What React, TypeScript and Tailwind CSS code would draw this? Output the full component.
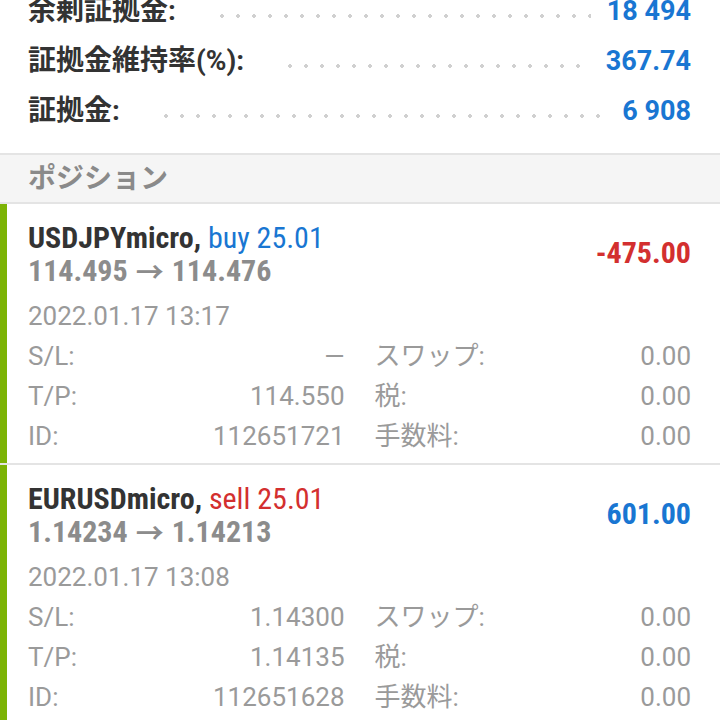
import React from 'react';

const cond = "font-['Roboto_Condensed','Liberation_Sans_Narrow',Roboto,sans-serif] [font-stretch:condensed]";

const summary = [
  { label: '余剰証拠金:', value: '18 494' },
  { label: '証拠金維持率(%):', value: '367.74' },
  { label: '証拠金:', value: '6 908' },
];

type Position = {
  symbol: string;
  side: string;
  sideColor: string;
  open: string;
  current: string;
  profit: string;
  profitColor: string;
  time: string;
  sl: string;
  tp: string;
  id: string;
};

const positions: Position[] = [
  {
    symbol: 'USDJPYmicro,',
    side: 'buy 25.01',
    sideColor: 'text-[#1976d2]',
    open: '114.495',
    current: '114.476',
    profit: '-475.00',
    profitColor: 'text-[#d32f2f]',
    time: '2022.01.17 13:17',
    sl: '—',
    tp: '114.550',
    id: '112651721',
  },
  {
    symbol: 'EURUSDmicro,',
    side: 'sell 25.01',
    sideColor: 'text-[#d32f2f]',
    open: '1.14234',
    current: '1.14213',
    profit: '601.00',
    profitColor: 'text-[#1976d2]',
    time: '2022.01.17 13:08',
    sl: '1.14300',
    tp: '1.14135',
    id: '112651628',
  },
];

const DetailCell = ({ label, value }: { label: string; value: string }) => (
  <div className="flex h-[40px] items-center justify-between">
    <span>{label}</span>
    <span>{value}</span>
  </div>
);

const PositionCard = ({ p }: { p: Position }) => (
  <div className="flex border-b-2 border-[#e4e4e4]">
    <div className="w-[7px] shrink-0 bg-[#7cb305]" />
    <div className="flex-1 pl-[21px] pr-[29px] pt-[17px] pb-[7px]">
      <div className="flex items-center justify-between">
        <div className={cond}>
          <div className="h-[33px] text-[30px] leading-[33px] whitespace-nowrap">
            <span className="font-bold text-[#333333]">{p.symbol}</span>{' '}
            <span className={p.sideColor}>{p.side}</span>
          </div>
          <div className="flex h-[33px] items-center gap-[8px] text-[30px] leading-[33px] font-bold text-[#8c8c8c] whitespace-nowrap">
            <span>{p.open}</span>
            <span className="font-['Noto_Sans_CJK_JP',sans-serif] text-[28px] leading-none font-bold">→</span>
            <span>{p.current}</span>
          </div>
        </div>
        <div className={`${cond} -mt-[4px] text-[30px] font-bold ${p.profitColor}`}>{p.profit}</div>
      </div>
      <div className="mt-[9px] font-['Roboto','Noto_Sans_CJK_JP',sans-serif] text-[26px] text-[#9a9a9a]">
        <div className="flex h-[40px] items-center">{p.time}</div>
        <div className="grid grid-cols-2 gap-x-[30px]">
          <DetailCell label="S/L:" value={p.sl} />
          <DetailCell label="スワップ:" value="0.00" />
          <DetailCell label="T/P:" value={p.tp} />
          <DetailCell label="税:" value="0.00" />
          <DetailCell label="ID:" value={p.id} />
          <DetailCell label="手数料:" value="0.00" />
        </div>
      </div>
    </div>
  </div>
);

export default function App() {
  return (
    <div className="h-[720px] w-[720px] overflow-hidden bg-white font-['Roboto','Noto_Sans_CJK_JP',sans-serif]">
      <div className="-mt-[14px] pb-[17px] pl-[28px] pr-[29px]">
        {summary.map((row) => (
          <div key={row.label} className="flex h-[50px] items-center">
            <span className="text-[28px] font-bold text-[#333333] whitespace-nowrap">{row.label}</span>
            <div className="ml-[38px] mr-[16px] h-[4px] flex-1 translate-y-[5px] bg-[radial-gradient(circle,#d0d0d0_1.6px,transparent_1.7px)] bg-[length:16px_4px]" />
            <span className="text-[27px] font-bold text-[#1976d2]">{row.value}</span>
          </div>
        ))}
      </div>
      <div className="flex h-[51px] items-center border-y-2 border-[#e4e4e4] bg-[#f5f5f5] pl-[28px] text-[28px] font-bold text-[#8a8a8a]">
        ポジション
      </div>
      {positions.map((p) => (
        <PositionCard key={p.id} p={p} />
      ))}
    </div>
  );
}
